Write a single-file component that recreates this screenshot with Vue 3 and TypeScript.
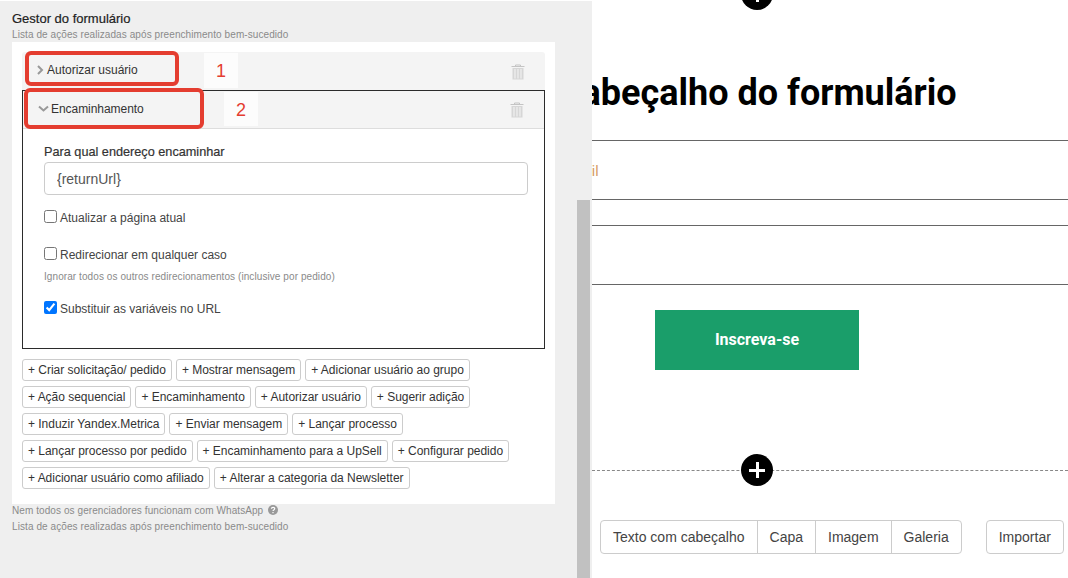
<script setup lang="ts">
const actions: string[][] = [
  ['Criar solicitação/ pedido', 'Mostrar mensagem', 'Adicionar usuário ao grupo'],
  ['Ação sequencial', 'Encaminhamento', 'Autorizar usuário', 'Sugerir adição'],
  ['Induzir Yandex.Metrica', 'Enviar mensagem', 'Lançar processo'],
  ['Lançar processo por pedido', 'Encaminhamento para a UpSell', 'Configurar pedido'],
  ['Adicionar usuário como afiliado', 'Alterar a categoria da Newsletter'],
]
const blocks: string[] = ['Texto com cabeçalho', 'Capa', 'Imagem', 'Galeria']
</script>

<template>
  <div class="page">
    <aside class="panel">
      <div class="panel-body">
        <h3 class="title">Gestor do formulário</h3>
        <p class="hint first">Lista de ações realizadas após preenchimento bem-sucedido</p>
        <div class="card">
          <div class="row closed">
            <span class="row-title">
              <svg class="chev" width="8" height="10" viewBox="0 0 8 10"><path d="M2 1l4 4-4 4" fill="none" stroke="#999" stroke-width="2" /></svg>
              Autorizar usuário
            </span>
            <svg class="trash" width="14" height="16" viewBox="0 0 14 16">
              <path d="M4.500 2.500V1h5v1.500M.5 2.500h13" fill="none" stroke="#c4c4c4" />
              <path d="M1.500 4h11v11.500h-11z" fill="#d6d6d6" />
              <path d="M4 5v9.500M7 5v9.500M10 5v9.500" stroke="#f2f2f2" stroke-width="1.100" />
            </svg>
          </div>
          <div class="open">
            <div class="row head">
              <span class="row-title">
                <svg class="chev down" width="11" height="8" viewBox="0 0 11 8"><path d="M1 1.500l4.500 4 4.500-4" fill="none" stroke="#999" stroke-width="2" /></svg>
                Encaminhamento
              </span>
              <svg class="trash" width="14" height="16" viewBox="0 0 14 16">
                <path d="M4.500 2.500V1h5v1.500M.5 2.500h13" fill="none" stroke="#c4c4c4" />
                <path d="M1.500 4h11v11.500h-11z" fill="#d6d6d6" />
                <path d="M4 5v9.500M7 5v9.500M10 5v9.500" stroke="#f2f2f2" stroke-width="1.100" />
              </svg>
            </div>
            <div class="form">
              <label class="label">Para qual endereço encaminhar</label>
              <input class="input" type="text" value="{returnUrl}" />
              <label class="check c1"><input type="checkbox" /><span>Atualizar a página atual</span></label>
              <label class="check c2"><input type="checkbox" /><span>Redirecionar em qualquer caso</span></label>
              <p class="small">Ignorar todos os outros redirecionamentos (inclusive por pedido)</p>
              <label class="check c3"><input type="checkbox" checked /><span>Substituir as variáveis no URL</span></label>
            </div>
          </div>
          <div class="actions">
            <div v-for="(line, i) in actions" :key="i" class="action-line">
              <button v-for="a in line" :key="a" class="action" type="button">+ {{ a }}</button>
            </div>
          </div>
          <div class="mark m1"></div>
          <div class="mark m2"></div>
          <span class="num n1">1</span>
          <span class="num n2">2</span>
        </div>
        <p class="hint after">
          Nem todos os gerenciadores funcionam com WhatsApp
          <svg class="help" width="10" height="10" viewBox="0 0 10 10">
            <circle cx="5" cy="5" r="5" fill="#999" />
            <path d="M3.400 3.800C3.500 1.900 6.800 2 6.700 3.800 6.600 4.900 5 4.900 5 6" fill="none" stroke="#fff" stroke-width="1.200" />
            <rect x="4.400" y="7" width="1.200" height="1.200" fill="#fff" />
          </svg>
        </p>
        <p class="hint last">Lista de ações realizadas após preenchimento bem-sucedido</p>
      </div>
      <div class="gutter"><div class="thumb"></div></div>
    </aside>

    <main class="canvas">
      <div class="plus top"><span class="plus-h"></span><span class="plus-v"></span></div>
      <h1 class="heading">Cabeçalho do formulário</h1>
      <div class="line first-line"></div>
      <div class="field-text">Email</div>
      <div class="line l2"></div>
      <div class="line l3"></div>
      <div class="line l4"></div>
      <div class="cta">Inscreva-se</div>
      <div class="divider">
        <div class="plus"><span class="plus-h"></span><span class="plus-v"></span></div>
      </div>
      <div class="tools">
        <div class="group">
          <button v-for="b in blocks" :key="b" class="tool" type="button">{{ b }}</button>
        </div>
        <button class="tool single" type="button">Importar</button>
      </div>
    </main>
  </div>
</template>

<style>
html, body { margin: 0; padding: 0; background: #fff; }
</style>

<style scoped>
.page {
  display: flex;
  width: 1068px;
  height: 578px;
  overflow: hidden;
  background: #fff;
  font-family: "Liberation Sans", Arial, sans-serif;
  color: #333;
}
.panel {
  display: flex;
  flex: 0 0 592px;
  height: 578px;
  box-sizing: border-box;
  background: #efefef;
  border-top: 1px solid #fff;
  position: relative;
  z-index: 2;
}
.panel-body { width: 577px; flex: none; padding-left: 12px; box-sizing: border-box; }
.gutter { width: 13px; flex: none; }
.thumb { margin-top: 199px; height: 379px; background: #c1c1c1; }
.title { margin: 11px 0 0; font-size: 13px; line-height: 14px; font-weight: 400; color: #222; -webkit-text-stroke: 0.2px #222; }
.hint { margin: 0; font-size: 10px; letter-spacing: 0.08px; line-height: 12px; color: #8a8a8a; }
.hint.first { margin-top: 3px; }
.hint.after { margin-top: 0; height: 17px; line-height: 13px; }
.help { vertical-align: -1px; margin-left: 2px; }
.card {
  position: relative;
  width: 543px;
  height: 462px;
  margin-top: 1px;
  box-sizing: border-box;
  padding: 10px 10px 0;
  background: #fff;
}
.row {
  display: flex;
  align-items: center;
  justify-content: space-between;
  background: #f4f4f4;
  font-size: 12px;
  color: #333;
}
.closed { height: 38px; padding: 0 20px 0 14px; box-sizing: border-box; border-radius: 3px 3px 0 0; }
.head { height: 38px; padding: 0 20px 0 15px; box-sizing: border-box; border-bottom: 1px solid #ddd; }
.row-title { display: inline-flex; align-items: center; gap: 3px; position: relative; top: -1px; }
.head .row-title { gap: 2px; letter-spacing: -0.05px; }
.chev { flex: none; }
.closed .trash { margin-top: 2px; }
.head .trash { margin-top: 1px; }
.open { height: 259px; box-sizing: border-box; border: 1px solid #2b2b2b; }
.form { padding: 15px 16px 0 21px; }
.label { display: block; font-size: 12.700px; line-height: 16px; color: #333; -webkit-text-stroke: 0.2px #333; }
.input {
  display: block;
  width: 484px;
  height: 33px;
  margin-top: 2px;
  padding: 0 12px;
  box-sizing: border-box;
  border: 1px solid #ccc;
  border-radius: 4px;
  background: #fff;
  outline: none;
  font: 14px "Liberation Sans", Arial, sans-serif;
  color: #555;
}
.check { display: flex; align-items: center; font-size: 12px; line-height: 16px; color: #444; }
.check input { width: 13px; height: 13px; margin: 0 3px 0 0; flex: none; position: relative; top: -2px; }
.c1 { margin-top: 15px; }
.c2 { margin-top: 21px; }
.c3 { margin-top: 17px; }
.small { margin: 7px 0 0; font-size: 10px; letter-spacing: 0.08px; line-height: 14px; color: #8a8a8a; }
.actions { margin-top: 10px; display: flex; flex-direction: column; gap: 5px; }
.action-line { display: flex; gap: 4px; }
.action {
  height: 22px;
  padding: 0 5px;
  box-sizing: border-box;
  border: 1px solid #ccc;
  border-radius: 3px;
  background: #fff;
  font: 12px "Liberation Sans", Arial, sans-serif;
  letter-spacing: -0.02px;
  color: #333;
  white-space: nowrap;
}
.mark { position: absolute; box-sizing: border-box; border: 4px solid #e43d30; border-radius: 6px; }
.m1 { left: 13px; top: 9px; width: 154px; height: 35px; }
.m2 { left: 12px; top: 46px; width: 180px; height: 41px; }
.num {
  position: absolute;
  width: 34px;
  height: 35px;
  background: #fcfcfc;
  color: #e43d30;
  font-size: 18px;
  line-height: 36px;
  text-align: center;
}
.n1 { left: 192px; top: 11px; }
.n2 { left: 212px; top: 50px; height: 34px; }

.canvas { position: relative; flex: 1; min-width: 0; height: 578px; overflow: hidden; }
.heading {
  position: relative;
  margin: 71px 0 0 -34px;
  font: 700 36px/45px Roboto, sans-serif;
  color: #000;
  white-space: nowrap;
}
.line { height: 1px; background: #666; }
.first-line { margin-top: 24px; }
.field-text { margin: 21px 0 0 -28px; font: 14px/18px Roboto, sans-serif; color: #d49a5e; }
.l2 { margin-top: 19px; }
.l3 { margin-top: 25px; }
.l4 { margin-top: 58px; }
.cta {
  width: 204px;
  height: 60px;
  margin: 25px 0 0 63px;
  background: #1a9e6a;
  color: #fff;
  font: 700 16px/60px Roboto, sans-serif;
  text-align: center;
}
.divider { position: relative; margin-top: 100px; border-top: 1px dashed #888; }
.plus { position: absolute; width: 32px; height: 32px; border-radius: 50%; background: #000; left: 149px; top: -17px; }
.plus.top { top: -22px; left: 149px; }
.plus-h { position: absolute; left: 8px; right: 8px; top: 14.500px; height: 3px; background: #fff; }
.plus-v { position: absolute; top: 8px; bottom: 8px; left: 14.500px; width: 3px; background: #fff; }
.tools { display: flex; gap: 24px; margin: 49px 0 0 8px; }
.group { display: flex; border: 1px solid #ccc; border-radius: 4px; }
.tool {
  height: 34px;
  padding: 0 12px;
  box-sizing: border-box;
  border: 0;
  border-left: 1px solid #ccc;
  background: #fff;
  font: 14px "Liberation Sans", Arial, sans-serif;
  color: #444;
  white-space: nowrap;
}
.group { height: 34px; box-sizing: border-box; }
.group .tool { height: 32px; background: transparent; }
.group .tool:first-child { border-left: 0; }
.single { border: 1px solid #ccc; border-radius: 4px; }
</style>
